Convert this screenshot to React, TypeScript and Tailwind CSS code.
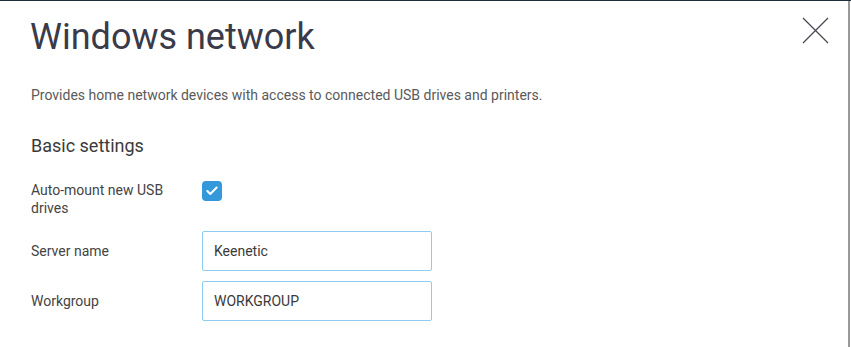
import { Check } from 'lucide-react';

export default function App() {
  return (
    <div className="w-[851px] h-[347px] bg-white border-t border-t-[#1c2e3a] overflow-hidden" style={{ fontFamily: 'Roboto, sans-serif' }}>
      <div className="relative h-full border-r-2 border-r-[#9a9a9a] mr-[1px] pl-[30px]">
        <button className="absolute right-[19px] top-[16px] w-[27px] h-[27px]">
          <svg viewBox="0 0 27 27" className="w-[27px] h-[27px]">
            <path d="M1 1 L26 26 M26 1 L1 26" stroke="#4a4a55" strokeWidth="1.3" fill="none" />
          </svg>
        </button>

        <h1 className="text-[36px] leading-[40px] text-[#3a3a48] pt-[16px] font-normal">Windows network</h1>

        <p className="text-[14px] leading-[20px] text-[#5a5a5a] mt-[28px] pl-[1px]">
          Provides home network devices with access to connected USB drives and printers.
        </p>

        <h2 className="text-[18px] leading-[24px] text-[#3a3a3a] mt-[29px] pl-[1px]">Basic settings</h2>

        <div className="mt-[20px] flex flex-col">
          <div className="flex items-start">
            <div className="w-[172px] pl-[1px] text-[14px] leading-[18px] text-[#444] pt-[3px] pr-[36px]">Auto-mount new USB drives</div>
            <div className="w-[20px] h-[20px] rounded-[4px] bg-[#3498db] flex items-center justify-center mt-[3px]">
              <Check className="w-[14px] h-[14px] text-white" strokeWidth={3.5} />
            </div>
          </div>
          <div className="flex items-center mt-[14px]">
            <div className="w-[172px] pl-[1px] text-[14px] text-[#444]">Server name</div>
            <input
              defaultValue="Keenetic"
              className="w-[230px] h-[40px] border border-[#8ecbf0] rounded-[2px] px-[11px] text-[14px] text-[#3a3a3a] outline-none"
              style={{ fontFamily: 'Roboto, sans-serif' }}
            />
          </div>
          <div className="flex items-center mt-[10px]">
            <div className="w-[172px] pl-[1px] text-[14px] text-[#444]">Workgroup</div>
            <input
              defaultValue="WORKGROUP"
              className="w-[230px] h-[40px] border border-[#8ecbf0] rounded-[2px] px-[11px] text-[14px] text-[#3a3a3a] outline-none"
              style={{ fontFamily: 'Roboto, sans-serif' }}
            />
          </div>
        </div>
      </div>
    </div>
  );
}
